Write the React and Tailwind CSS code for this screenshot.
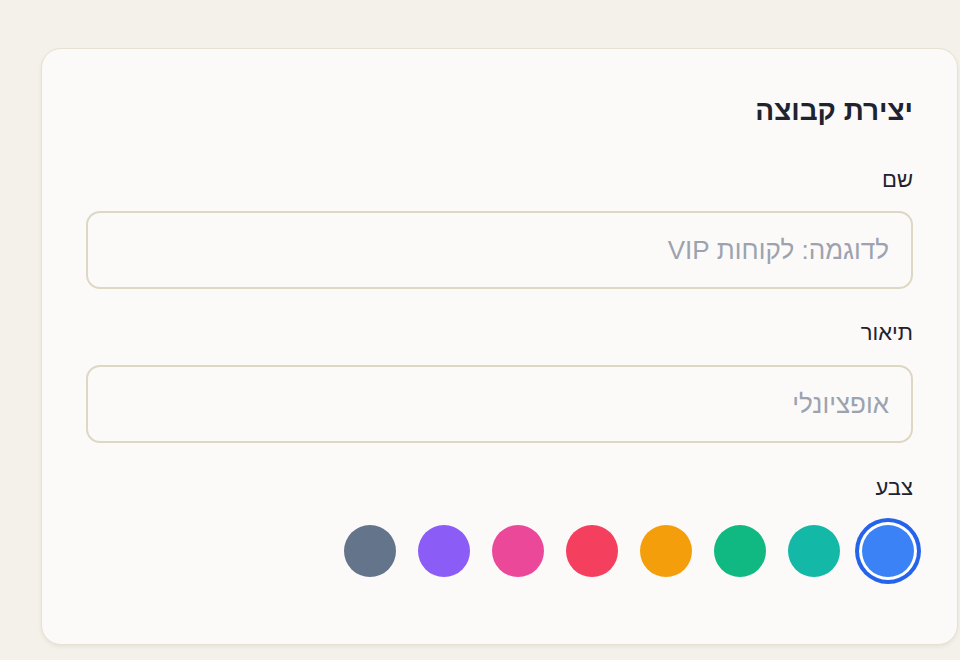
export default function App() {
  const colors = [
    "bg-[#3b82f6]",
    "bg-[#14b8a6]",
    "bg-[#10b981]",
    "bg-[#f59e0b]",
    "bg-[#f43f5e]",
    "bg-[#ec4899]",
    "bg-[#8b5cf6]",
    "bg-[#64748b]",
  ];
  return (
    <div
      dir="rtl"
      className="w-[960px] h-[660px] bg-[#f4f1ea] overflow-hidden"
      style={{ fontFamily: '"Liberation Sans", "Open Sans", sans-serif' }}
    >
      <div className="pt-[48px] pr-[2px] pl-[41px]">
        <div className="rounded-[20px] border border-[#e6e1d3] bg-[#fbfaf8] shadow-[0_2px_4px_rgba(0,0,0,0.06)] px-[44px] pt-[46px] pb-[67px]">
          <h2 className="text-[28px] leading-[32px] font-bold text-[#1f2330]">יצירת קבוצה</h2>

          <label className="block mt-[39px] text-[22px] leading-[28px] text-[#1f2330]">שם</label>
          <input
            className="mt-[17px] block w-full h-[78px] rounded-[14px] border-2 border-[#ddd7c3] bg-transparent px-[22px] text-[26px] text-[#1f2330] placeholder:text-[#9ca3af] outline-none"
            placeholder="לדוגמה: לקוחות VIP"
          />

          <label className="block mt-[30px] text-[22px] leading-[28px] text-[#1f2330]">תיאור</label>
          <input
            className="mt-[18px] block w-full h-[78px] rounded-[14px] border-2 border-[#ddd7c3] bg-transparent px-[22px] text-[26px] text-[#1f2330] placeholder:text-[#9ca3af] outline-none"
            placeholder="אופציונלי"
          />

          <label className="block mt-[31px] text-[22px] leading-[28px] text-[#1f2330]">צבע</label>
          <div className="mt-[23px] flex gap-[22px] -mr-[1px]">
            {colors.map((c, i) => (
              <button
                key={c}
                className={`w-[52px] h-[52px] rounded-full ${c} ${
                  i === 0 ? "ring-[4px] ring-[#2563eb] ring-offset-[3px] ring-offset-white" : ""
                }`}
              />
            ))}
          </div>
        </div>
      </div>
    </div>
  );
}
